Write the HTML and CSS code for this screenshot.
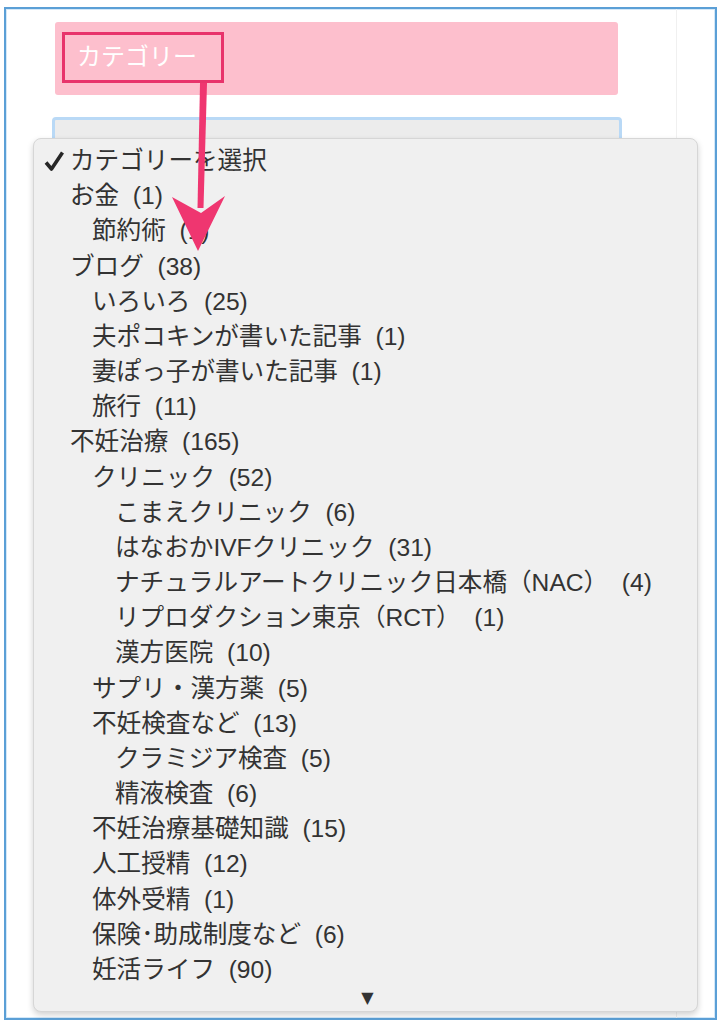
FILE: index.html
```html
<!DOCTYPE html>
<html lang="ja">
<head>
    <meta charset="UTF-8">
    <meta name="viewport" content="width=device-width, initial-scale=1.0">
    <title>カテゴリー</title>
    <link rel="stylesheet" href="styles.css">
</head>
<body>
    <div class="frame">
        <div class="main">
            <div class="widget-title">
                <div class="title-box">カテゴリー</div>
            </div>
            <div class="select-box"></div>
        </div>
        <div class="side"></div>

        <!-- the open dropdown list -->
        <ul class="dropdown">
            <li class="lv0 selected">
                <svg class="check" width="22" height="22" viewBox="0 0 22 22">
                    <path d="M3 12.5 L8.5 19 L19.5 2.5" fill="none" stroke="#262626" stroke-width="3.6" stroke-linejoin="round"/>
                </svg>カテゴリーを選択</li>
            <li class="lv0">お金&nbsp; (1)</li>
            <li class="lv1">節約術&nbsp; (1)</li>
            <li class="lv0">ブログ&nbsp; (38)</li>
            <li class="lv1">いろいろ&nbsp; (25)</li>
            <li class="lv1">夫ポコキンが書いた記事&nbsp; (1)</li>
            <li class="lv1">妻ぽっ子が書いた記事&nbsp; (1)</li>
            <li class="lv1">旅行&nbsp; (11)</li>
            <li class="lv0">不妊治療&nbsp; (165)</li>
            <li class="lv1">クリニック&nbsp; (52)</li>
            <li class="lv2">こまえクリニック&nbsp; (6)</li>
            <li class="lv2">はなおかIVFクリニック&nbsp; (31)</li>
            <li class="lv2">ナチュラルアートクリニック日本橋（NAC）&nbsp; (4)</li>
            <li class="lv2">リプロダクション東京（RCT）&nbsp; (1)</li>
            <li class="lv2">漢方医院&nbsp; (10)</li>
            <li class="lv1">サプリ・漢方薬&nbsp; (5)</li>
            <li class="lv1">不妊検査など&nbsp; (13)</li>
            <li class="lv2">クラミジア検査&nbsp; (5)</li>
            <li class="lv2">精液検査&nbsp; (6)</li>
            <li class="lv1">不妊治療基礎知識&nbsp; (15)</li>
            <li class="lv1">人工授精&nbsp; (12)</li>
            <li class="lv1">体外受精&nbsp; (1)</li>
            <li class="lv1">保険･助成制度など&nbsp; (6)</li>
            <li class="lv1">妊活ライフ&nbsp; (90)</li>
            <li class="more">▼</li>
        </ul>
    </div>

    <!-- annotation arrow drawn over the screenshot -->
    <svg class="arrow" width="727" height="1024" viewBox="0 0 727 1024">
        <polygon points="200,83 207,83 203.5,208 197.5,208" fill="#ef3670"/>
        <polygon points="172,197 198,251 225,196 201,213" fill="#ef3670"/>
    </svg>
</body>
</html>
```

FILE: styles.css
```css
body {
    margin: 0;
    padding: 0;
    background-color: #ffffff;
    font-family: "Liberation Sans", "Noto Sans CJK JP", sans-serif;
    color: #333333;
    position: relative;
}
.frame {
    position: relative;
    display: flex;
    width: 709px;
    height: 1009px;
    margin: 7px 0 0 4px;
    border: 2px solid #5b9fd6;
    box-shadow: inset 0 0 0 1px #d4e8f8;
    background-color: #ffffff;
}
.main {
    width: 671px;
    padding: 13px 0 0 49px;
    box-sizing: border-box;
    border-right: 1px solid #f0f0f0;
}
.side {
    flex: 1;
}
.widget-title {
    width: 563px;
    height: 73px;
    background-color: #fdbfcd;
    border-radius: 3px;
    padding: 10px 0 0 7px;
    box-sizing: border-box;
}
.title-box {
    width: 162px;
    height: 51px;
    box-sizing: border-box;
    border: 3px solid #e8336b;
    color: #ffffff;
    font-size: 24px;
    line-height: 44px;
    padding-left: 12px;
}
.select-box {
    width: 570px;
    height: 44px;
    margin: 22px 0 0 -3px;
    box-sizing: border-box;
    border: 3px solid #b9d9f6;
    border-radius: 4px;
    background-color: #ececec;
}
.dropdown {
    position: absolute;
    left: 27px;
    top: 129px;
    width: 665px;
    height: 874px;
    box-sizing: border-box;
    margin: 0;
    padding: 4px 0 0 0;
    list-style: none;
    background-color: #f0f0f0;
    border: 1px solid #d6d6d6;
    border-radius: 8px;
    box-shadow: 0 3px 6px rgba(0, 0, 0, 0.18);
    font-size: 24.6px;
    line-height: 35.17px;
    white-space: nowrap;
}
.dropdown li {
    position: relative;
}
.lv0 {
    padding-left: 36px;
}
.lv1 {
    padding-left: 58px;
}
.lv2 {
    padding-left: 81px;
}
.check {
    position: absolute;
    left: 9px;
    top: 7px;
}
.more {
    text-align: center;
    font-family: "DejaVu Sans", sans-serif;
    font-size: 16px;
    line-height: 20px;
    padding: 1px 0 0 4px;
    color: #333333;
}
.arrow {
    position: absolute;
    left: 0;
    top: 0;
    pointer-events: none;
}
```
